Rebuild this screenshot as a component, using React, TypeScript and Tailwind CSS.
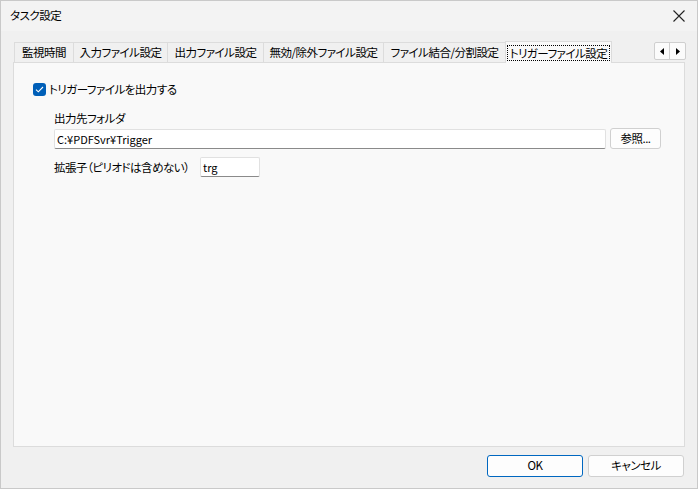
import { useState } from "react";

const tabs = [
  { label: "監視時間", w: "w-[59px]" },
  { label: "入力ファイル設定", w: "w-[94px]" },
  { label: "出力ファイル設定", w: "w-[96px]" },
  { label: "無効/除外ファイル設定", w: "w-[120px]" },
  { label: "ファイル結合/分割設定", w: "w-[122px]" },
];

export default function App() {
  const [checked, setChecked] = useState(true);

  return (
    <div className="w-[698px] h-[489px] bg-[#f0f0f0] border border-[#c9c9c9] flex flex-col text-[11px] tracking-[-0.5px] text-black [font-family:'Noto_Sans_CJK_JP','Noto_Sans',sans-serif] [font-feature-settings:'palt'] overflow-hidden">
      {/* title bar */}
      <div className="h-[30px] bg-[#f3f3f3] flex items-center justify-between pl-[9px] pr-[10px] shrink-0">
        <span className="text-[11.5px]">タスク設定</span>
        <svg width="14" height="14" viewBox="0 0 14 14" className="mr-[1px]">
          <path d="M1.5 1.5 L12.5 12.5 M12.5 1.5 L1.5 12.5" stroke="#222" strokeWidth="1.1" />
        </svg>
      </div>

      {/* tabs */}
      <div className="flex items-end pl-[13px] pr-[11px] pt-[10px] shrink-0">
        {tabs.map((t) => (
          <div
            key={t.label}
            className={`${t.w} h-[20px] flex items-center justify-center bg-[#f0f0f0] border-t border-l border-[#dcdcdc] last:border-r text-[11.5px] leading-none whitespace-nowrap`}
          >
            {t.label}
          </div>
        ))}
        <div className="w-[107px] h-[22px] -mb-px bg-[#f9f9f9] border border-b-0 border-[#dcdcdc] flex items-center justify-center relative z-10 text-[11.5px]">
          <span className="border border-dotted border-black px-[2px] leading-[14px] whitespace-nowrap">トリガーファイル設定</span>
        </div>
        <div className="flex-1" />
        <div className="mb-[2px] flex h-[18px] border border-[#cfcfcf] bg-[#fbfbfb] rounded-[2px]">
          <div className="w-[15px] flex items-center justify-center border-r border-[#cfcfcf]">
            <svg width="4" height="7" viewBox="0 0 4 7"><path d="M4 0 L0 3.5 L4 7 Z" fill="#000" /></svg>
          </div>
          <div className="w-[15px] flex items-center justify-center">
            <svg width="4" height="7" viewBox="0 0 4 7"><path d="M0 0 L4 3.5 L0 7 Z" fill="#000" /></svg>
          </div>
        </div>
      </div>

      {/* panel */}
      <div className="mx-[12px] h-[385px] bg-[#f9f9f9] border border-[#dcdcdc] shrink-0 pl-[19px] pr-[23px] pt-[18px] text-[11.5px]">
        <label className="flex items-center gap-[3px] cursor-pointer" onClick={() => setChecked(!checked)}>
          <span className={`w-[13px] h-[13px] rounded-[3px] flex items-center justify-center ${checked ? "bg-[#005fb8]" : "bg-white border border-[#888]"}`}>
            {checked && (
              <svg width="9" height="7" viewBox="0 0 9 7">
                <path d="M1 3.6 L3.3 5.8 L8 1" stroke="#fff" strokeWidth="1.1" fill="none" />
              </svg>
            )}
          </span>
          <span>トリガーファイルを出力する</span>
        </label>

        <div className="pl-[21px] mt-[12px]">
          <div className="leading-[16px]">出力先フォルダ</div>
          <div className="flex items-center gap-[4px] mt-[2px]">
            <div className="flex-1 h-[20px] bg-white border border-[#e1e1e1] border-b-[#8a8a8a] flex items-center pl-[2px] rounded-[2px] text-[11px] tracking-normal">
              C:¥PDFSvr¥Trigger
            </div>
            <button className="w-[51px] h-[21px] bg-[#fdfdfd] border border-[#d0d0d0] rounded-[3px] leading-none">
              参照...
            </button>
          </div>
          <div className="flex items-center mt-[8px]">
            <span className="w-[146px] shrink-0 whitespace-nowrap">拡張子（ピリオドは含めない）</span>
            <div className="w-[60px] h-[20px] bg-white border border-[#e1e1e1] border-b-[#8a8a8a] flex items-center pl-[2px] rounded-[2px] text-[11px] tracking-normal">
              trg
            </div>
          </div>
        </div>
      </div>

      {/* buttons */}
      <div className="flex justify-end gap-[5px] pr-[13px] pt-[8px]">
        <button className="w-[96px] h-[22px] bg-[#fdfdfd] border border-[#0067c0] rounded-[3px] text-[11.5px] leading-none">
          OK
        </button>
        <button className="w-[96px] h-[22px] bg-[#fdfdfd] border border-[#d0d0d0] rounded-[3px] text-[11.5px] leading-none">
          キャンセル
        </button>
      </div>
    </div>
  );
}
